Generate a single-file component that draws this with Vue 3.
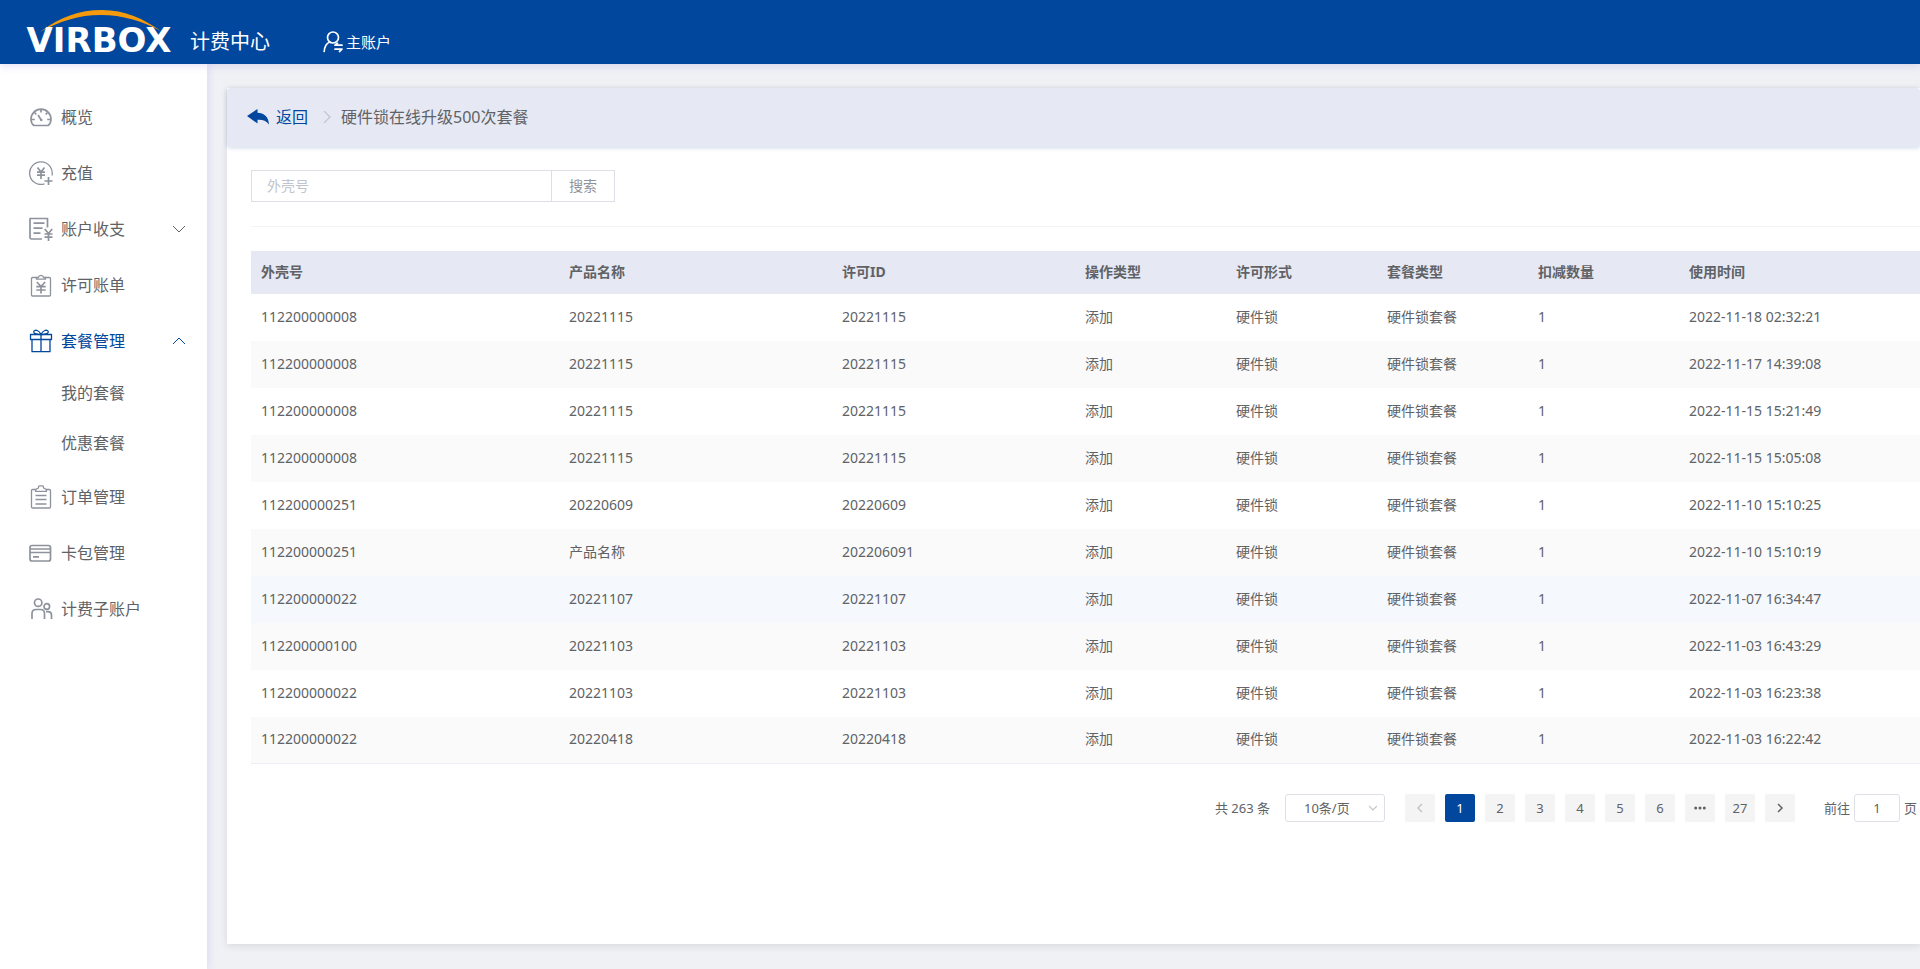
<script setup>
import { ref } from 'vue'

const menu = [
  { label: '概览', icon: 'gauge' },
  { label: '充值', icon: 'recharge' },
  { label: '账户收支', icon: 'ledger', arrow: 'down' },
  { label: '许可账单', icon: 'bill' },
  { label: '套餐管理', icon: 'gift', arrow: 'up', active: true, children: ['我的套餐', '优惠套餐'] },
  { label: '订单管理', icon: 'order' },
  { label: '卡包管理', icon: 'card' },
  { label: '计费子账户', icon: 'users' },
]

const columns = ['外壳号', '产品名称', '许可ID', '操作类型', '许可形式', '套餐类型', '扣减数量', '使用时间']

const records = [
  ['112200000008', '20221115', '20221115', '2022-11-18 02:32:21'],
  ['112200000008', '20221115', '20221115', '2022-11-17 14:39:08'],
  ['112200000008', '20221115', '20221115', '2022-11-15 15:21:49'],
  ['112200000008', '20221115', '20221115', '2022-11-15 15:05:08'],
  ['112200000251', '20220609', '20220609', '2022-11-10 15:10:25'],
  ['112200000251', '产品名称', '202206091', '2022-11-10 15:10:19'],
  ['112200000022', '20221107', '20221107', '2022-11-07 16:34:47'],
  ['112200000100', '20221103', '20221103', '2022-11-03 16:43:29'],
  ['112200000022', '20221103', '20221103', '2022-11-03 16:23:38'],
  ['112200000022', '20220418', '20220418', '2022-11-03 16:22:42'],
].map(([shell, product, license, time]) => [shell, product, license, '添加', '硬件锁', '硬件锁套餐', '1', time])

const highlighted = 6
const keyword = ref('')
const pageSize = ref('10')
const current = ref(1)
const jump = ref('1')
</script>

<template>
  <div class="app">
    <header class="topbar">
      <a class="brand" href="#">
        <svg class="arc" viewBox="0 0 150 22" aria-hidden="true">
          <path d="M16 22C36 7 55 0 78 0c23 0 42 9 59 21C118 11 98 5 77 5 55 5 36 11 16 22z" fill="#f59a0c" />
        </svg>
        <span class="word">VIRBOX</span>
      </a>
      <span class="center-name">计费中心</span>
      <a class="account" href="#">
        <svg viewBox="0 0 20 22" fill="none" stroke="#fff" stroke-width="1.7" stroke-linecap="round" stroke-linejoin="round" aria-hidden="true">
          <circle cx="10" cy="6.500" r="5.500" />
          <path d="M6.500 11C3.500 12.500 1.500 16 1.200 20.500M12 14.200h7M14.500 12.300L12 14.200M12 18.200h7L16.500 20.500" />
        </svg>
        <span>主账户</span>
      </a>
    </header>

    <div class="body">
      <nav class="sidebar">
        <ul>
          <li v-for="m in menu" :key="m.label">
            <a href="#" class="item" :class="{ active: m.active }">
              <svg class="icon" viewBox="0 0 24 24" fill="none" stroke="currentColor" stroke-width="1.700" stroke-linejoin="round" aria-hidden="true">
                <g v-if="m.icon === 'gauge'">
                  <path d="M5 20.500C2.800 19 2 16.500 2 14.200a10 10 0 0 1 20 0c0 2.300-.8 4.800-3 6.300z" />
                  <path d="M12 4.500v3M5.500 7.500l1.800 1.800M18.500 7.500l-1.800 1.800M2.500 14.500h3.300M21.500 14.500h-3.300M9 10l3.200 5" />
                  <circle cx="12.300" cy="15" r="1.200" fill="currentColor" stroke="none" />
                </g>
                <g v-else-if="m.icon === 'recharge'">
                  <path d="M15.500 22.900A11.300 11.300 0 1 1 23 14.500" stroke-width="1.300" />
                  <path d="M8.500 6.500l3.500 4.500 3.500-4.500M8 11.200h8M8 14.200h8M12 11v7" />
                  <path d="M19.500 16v8M15.500 20h8" />
                </g>
                <g v-else-if="m.icon === 'ledger'">
                  <path d="M13 22H2.500Q1 22 1 20.500V1.500h17.500v9" />
                  <path d="M4.500 6.200h11M4.500 11.200h9M4.500 16.200h7" />
                  <path d="M15.800 12l3.700 4.500 3.700-4.500M15.500 17h8M15.500 20.200h8M19.500 16.500V24" />
                </g>
                <g v-else-if="m.icon === 'bill'">
                  <path d="M8 4.500H3.500q-1 0-1 1V22q0 1 1 1h17q1 0 1-1V5.500q0-1-1-1H16" stroke-width="1.300" />
                  <path d="M7.500 6.200V4.500h1.800a2.800 2.800 0 0 1 5.400 0h1.800v1.700z" stroke-width="1.300" />
                  <path d="M7.800 9l4.200 4.500L16.200 9M7.300 13.700h9.400M7.300 17h9.400M12 13.500V20.500" />
                </g>
                <g v-else-if="m.icon === 'gift'">
                  <path d="M1.500 5.500h21v5h-21zM3 10.500h18v12.200H3zM12 5.500v17.200" stroke-width="1.300" />
                  <path d="M12 5.500C9.500 5.500 5.500 5.300 4.800 3.300 4.300 1.600 6.500.8 8.200 1.500 10 2.200 11.300 3.800 12 5.500c.7-1.700 2-3.300 3.800-4 1.700-.7 3.900.1 3.400 1.800-.7 2-4.700 2.200-7.200 2.200" stroke-width="1.300" />
                </g>
                <g v-else-if="m.icon === 'order'">
                  <path d="M7.500 4.500H3.500q-1 0-1 1V22q0 1 1 1h17q1 0 1-1V5.500q0-1-1-1h-4" stroke-width="1.300" />
                  <path d="M6.500 6.300V4.500L9.500 3V1.800q0-1 1-1h3q1 0 1 1V3l3 1.500v1.800z" stroke-width="1.300" />
                  <path d="M6.500 10.500h11M6.500 14.500h11M6.500 19h11" stroke-width="1.300" />
                </g>
                <g v-else-if="m.icon === 'card'">
                  <rect x="1" y="4.500" width="20.500" height="15.500" rx="2" />
                  <path d="M1 8h20.500M1 11.500h20.500M4 15.800h6" />
                </g>
                <g v-else>
                  <circle cx="9.200" cy="5.700" r="3.700" />
                  <circle cx="17.800" cy="9.500" r="2.800" />
                  <path d="M3 22v-5.500q0-4 4-4h4.500q4 0 4 4V22M17 14.700h1.800q3.700 0 3.700 3.500V22" />
                </g>
              </svg>
              <span class="label">{{ m.label }}</span>
              <svg v-if="m.arrow" class="chevron" viewBox="0 0 12 12" fill="none" stroke="currentColor" aria-hidden="true">
                <path :d="m.arrow === 'down' ? 'M0 3l6 6 6-6' : 'M0 9l6-6 6 6'" />
              </svg>
            </a>
            <ul v-if="m.children">
              <li v-for="c in m.children" :key="c"><a href="#" class="sub">{{ c }}</a></li>
            </ul>
          </li>
        </ul>
      </nav>

      <main class="main">
        <section class="panel">
          <div class="crumbs">
            <a href="#" class="back">
              <svg viewBox="0 0 22 16" fill="currentColor" aria-hidden="true">
                <path d="M0 7L10.500 0v3.800C17 4 21.500 7.500 22 15.500 19 11.500 15.500 10.500 10.500 10.800V14.500z" />
              </svg>
              <span>返回</span>
            </a>
            <svg class="sep" viewBox="0 0 8 12" fill="none" stroke="#c0c4cc" stroke-width="1.200" aria-hidden="true"><path d="M1 0l6 6-6 6" /></svg>
            <span>硬件锁在线升级500次套餐</span>
          </div>

          <div class="content">
            <form class="search" @submit.prevent>
              <input v-model="keyword" type="text" placeholder="外壳号" aria-label="外壳号" />
              <button type="submit">搜索</button>
            </form>

            <table>
              <colgroup>
                <col class="c-shell" /><col class="c-product" /><col class="c-license" />
                <col class="c-type" /><col class="c-type" /><col class="c-type" /><col class="c-type" /><col />
              </colgroup>
              <thead>
                <tr><th v-for="c in columns" :key="c" scope="col">{{ c }}</th></tr>
              </thead>
              <tbody>
                <tr v-for="(r, i) in records" :key="i" :class="{ hover: i === highlighted }">
                  <td v-for="(v, j) in r" :key="j">{{ v }}</td>
                </tr>
              </tbody>
            </table>

            <div class="pager">
              <span class="total">共 263 条</span>
              <div class="size">
                <select v-model="pageSize" aria-label="每页条数">
                  <option value="10">10条/页</option>
                  <option value="20">20条/页</option>
                </select>
                <svg viewBox="0 0 8 8" fill="none" stroke="#c0c4cc" stroke-width="1.200" aria-hidden="true"><path d="M0 2l4 4 4-4" /></svg>
              </div>
              <div class="pages">
                <button type="button" disabled aria-label="上一页">
                  <svg viewBox="0 0 10 10" fill="none" stroke="#c0c4cc" stroke-width="1.500" aria-hidden="true"><path d="M7 1L3 5l4 4" /></svg>
                </button>
                <button v-for="n in 6" :key="n" type="button" :class="{ on: n === current }" @click="current = n">{{ n }}</button>
                <button type="button" aria-label="更多页">
                  <svg class="dots" viewBox="0 0 12 10" fill="currentColor" aria-hidden="true"><circle cx="1.700" cy="5" r="1.500" /><circle cx="6" cy="5" r="1.500" /><circle cx="10.300" cy="5" r="1.500" /></svg>
                </button>
                <button type="button" @click="current = 27">27</button>
                <button type="button" aria-label="下一页">
                  <svg viewBox="0 0 10 10" fill="none" stroke="currentColor" stroke-width="1.500" aria-hidden="true"><path d="M3 1l4 4-4 4" /></svg>
                </button>
              </div>
              <label class="jump">前往<input v-model="jump" type="text" />页</label>
            </div>
          </div>
        </section>
      </main>
    </div>
  </div>
</template>

<style>
body {
  margin: 0;
  background: #f0f1f5;
}
</style>

<style scoped>
* {
  box-sizing: border-box;
}
.app {
  min-height: 100vh;
  display: flex;
  flex-direction: column;
  font-family: "Noto Sans", "Noto Sans CJK SC", sans-serif;
  font-size: 14px;
  line-height: 20px;
  color: #606266;
  background: #f0f1f5;
}
a {
  color: inherit;
  text-decoration: none;
}
ul {
  list-style: none;
  margin: 0;
  padding: 0;
}
svg {
  display: block;
  flex: none;
}
button,
input,
select {
  font: inherit;
  color: inherit;
  margin: 0;
}

.topbar {
  height: 64px;
  display: flex;
  align-items: flex-start;
  padding: 10px 24px 0;
  background: #00479d;
  color: #fff;
  position: relative;
  z-index: 2;
  box-shadow: 0 2px 8px rgba(90, 70, 220, 0.16);
}
.brand {
  width: 150px;
  display: flex;
  flex-direction: column;
  align-items: center;
}
.arc {
  width: 150px;
  height: 22px;
}
.word {
  font-family: "DejaVu Sans", sans-serif;
  font-weight: 700;
  font-size: 34px;
  line-height: 16px;
}
.center-name {
  margin: 20px 0 0 16px;
  font-size: 20px;
  line-height: 24px;
}
.account {
  display: flex;
  align-items: center;
  gap: 3px;
  margin: 20px 0 0 53px;
  font-size: 15px;
  line-height: 24px;
}
.account svg {
  width: 20px;
  height: 22px;
}

.body {
  flex: 1;
  display: flex;
}
.sidebar {
  flex: none;
  width: 207px;
  padding-top: 25px;
  background: #fff;
  font-size: 16px;
  box-shadow: 2px 0 8px rgba(90, 70, 220, 0.12);
}
.item {
  height: 56px;
  display: flex;
  align-items: center;
  gap: 8px;
  padding: 0 22px 0 29px;
}
.icon {
  width: 24px;
  height: 24px;
  color: #8d929c;
}
.label {
  flex: 1;
}
.chevron {
  width: 12px;
  height: 12px;
}
.active,
.active .icon {
  color: #00479d;
}
.sub {
  display: block;
  padding: 0 0 2px 61px;
  line-height: 48px;
}

.main {
  flex: 1;
  min-width: 0;
  display: flex;
  padding: 24px 0 25px 20px;
}
.panel {
  flex: 1;
  min-width: 0;
  background: #fff;
  box-shadow: 0 2px 8px rgba(0, 0, 0, 0.1);
}
.crumbs {
  height: 59px;
  display: flex;
  align-items: center;
  padding: 0 20px 2px;
  font-size: 16px;
  background: #e6e9f3;
  border-radius: 4px;
  box-shadow: 0 1px 4px rgba(0, 71, 157, 0.2);
}
.back {
  display: flex;
  align-items: center;
  gap: 7px;
  color: #00479d;
}
.back svg {
  width: 22px;
  height: 16px;
}
.sep {
  width: 8px;
  height: 12px;
  margin: 0 10px 0 15px;
}
.content {
  padding: 23px 0 0 24px;
}
.search {
  display: flex;
  padding-bottom: 24px;
  margin-bottom: 24px;
  border-bottom: 1px solid #f2f3f5;
}
.search input {
  width: 301px;
  height: 32px;
  padding: 0 15px 2px;
  border: 1px solid #dcdfe6;
  outline: none;
  background: #fff;
}
.search input::placeholder {
  color: #c0c4cc;
  opacity: 1;
}
.search button {
  width: 63px;
  height: 32px;
  padding: 0;
  border: 1px solid #dcdfe6;
  border-left: 0;
  background: #fff;
  color: #909399;
}

table {
  width: 100%;
  table-layout: fixed;
  border-collapse: separate;
  border-spacing: 0;
}
.c-shell {
  width: 308px;
}
.c-product {
  width: 273px;
}
.c-license {
  width: 243px;
}
.c-type {
  width: 151px;
}
th,
td {
  padding: 0 10px 2px;
  text-align: left;
  white-space: nowrap;
}
th {
  height: 43px;
  font-weight: 700;
  background: #e6e9f3;
}
td {
  height: 47px;
}
tbody tr:nth-child(even) {
  background: #fafafa;
}
tbody tr.hover {
  background: #f5f8fd;
}
tbody tr:last-child td {
  border-bottom: 1px solid #ebeef5;
}

.pager {
  display: flex;
  align-items: center;
  justify-content: flex-end;
  padding: 30px 3px 0 0;
  font-size: 13px;
}
.size {
  position: relative;
  margin: 0 20px 0 15px;
}
.size select {
  appearance: none;
  display: block;
  width: 100px;
  height: 28px;
  padding: 0 24px 0 18px;
  border: 1px solid #dcdfe6;
  border-radius: 3px;
  background: #fff;
}
.size svg {
  position: absolute;
  right: 8px;
  top: 10px;
  width: 8px;
  height: 8px;
  pointer-events: none;
}
.pages {
  display: flex;
  gap: 10px;
}
.pages button {
  width: 30px;
  height: 28px;
  display: flex;
  align-items: center;
  justify-content: center;
  padding: 0;
  border: 0;
  border-radius: 2px;
  background: #f4f4f5;
}
.pages button.on {
  background: #00479d;
  color: #fff;
}
.pages svg {
  width: 10px;
  height: 10px;
}
.pages .dots {
  width: 12px;
}
.jump {
  display: flex;
  align-items: center;
  gap: 4px;
  margin-left: 29px;
}
.jump input {
  width: 46px;
  height: 28px;
  padding: 0;
  text-align: center;
  border: 1px solid #dcdfe6;
  border-radius: 3px;
  outline: none;
  background: #fff;
}
</style>
